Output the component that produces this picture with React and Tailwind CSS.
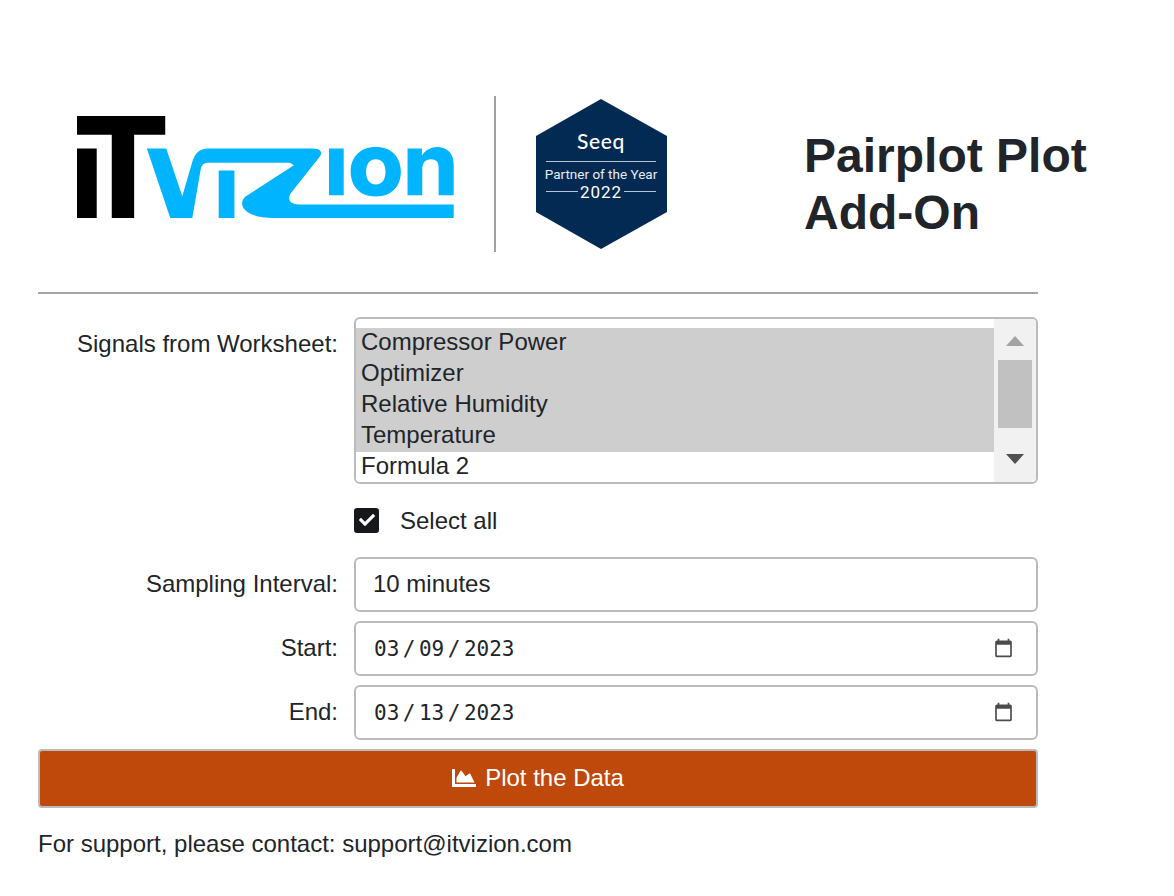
import React from 'react';
import { FaChartArea, FaCheck } from 'react-icons/fa';

const signals = [
  { name: 'Compressor Power', selected: true },
  { name: 'Optimizer', selected: true },
  { name: 'Relative Humidity', selected: true },
  { name: 'Temperature', selected: true },
  { name: 'Formula 2', selected: false },
];

const Logo = () => (
  <svg width="377" height="103" viewBox="53 78 1128 308" className="shrink-0 mb-[14px]">
    <path d="M53 78H317V134H224V383H157V134H53ZM53 175H112V383H53Z" fill="#000" />
    <path
      fill="#00b4ff"
      d="M262 175H320L368 318L398 215C405 190 420 175 445 175H760C785 176 790 188 775 205L692 310C680 332 695 343 725 343H1180V383H640C565 383 530 350 555 320L702 225L690 218H445C432 218 426 225 423 238L398 383H332Z"
    />
    <path fill="#00b4ff" d="M477 241H524V383H477ZM807 175H851V315H807ZM1042 175H1085V196C1097 180 1112 171 1130 171C1162 171 1180 190 1180 225V315H1135V232C1135 215 1128 207 1112 207C1096 207 1086 218 1086 236V315H1042Z" />
    <path fill="#00b4ff" fillRule="evenodd" d="M947 171C995 171 1022 202 1022 245C1022 288 995 319 947 319C899 319 872 288 872 245C872 202 899 171 947 171ZM947 207C927 207 918 223 918 245C918 267 927 283 947 283C967 283 976 267 976 245C976 223 967 207 947 207Z" />
  </svg>
);

const Badge = () => (
  <svg width="132" height="151" viewBox="0 0 132 151" className="shrink-0">
    <polygon points="65,0 131,37 131,113 65,150 0,113 0,37" fill="#032a52" />
    <text x="65" y="50" textAnchor="middle" fill="#fff" fontSize="21" fontWeight="500" letterSpacing="0.6" fontFamily="'Lato', sans-serif">Seeq</text>
    <line x1="10" x2="120" y1="62.5" y2="62.5" stroke="#b9c4d0" strokeWidth="1" />
    <text x="65" y="80" textAnchor="middle" fill="#e8edf2" fontSize="13.5" fontFamily="'Roboto', sans-serif">Partner of the Year</text>
    <line x1="10" x2="42" y1="92.5" y2="92.5" stroke="#b9c4d0" strokeWidth="1" />
    <line x1="88" x2="120" y1="92.5" y2="92.5" stroke="#b9c4d0" strokeWidth="1" />
    <text x="65" y="99" textAnchor="middle" fill="#fff" fontSize="17" letterSpacing="1" fontFamily="'Roboto', sans-serif">2022</text>
  </svg>
);

const Row = ({ label, children }) => (
  <div className="flex items-center">
    <label className="w-[300px] pb-[2px] text-right">{label}</label>
    <div className="ml-4 flex-1">{children}</div>
  </div>
);

const DateField = ({ value }) => (
  <input
    type="date"
    defaultValue={value}
    className="w-full h-[55px] pl-[17px] pr-[20px] border-2 border-[#bbbbbb] rounded-md bg-white font-['DejaVu_Sans_Mono',monospace] text-[21px] text-[#212529] [&::-webkit-datetime-edit-text]:px-[2.5px] [&::-webkit-calendar-picker-indicator]:opacity-70"
  />
);

export default function App() {
  return (
    <div className="w-[1174px] h-[896px] bg-white text-[24px] leading-[30px] text-[#212529] font-['Liberation_Sans',sans-serif]">
      <div className="ml-[38px] w-[1000px] pt-[96px]">
        <div className="flex items-center h-[156px] pl-[39px] whitespace-nowrap">
          <Logo />
          <div className="ml-[40px] w-[2px] h-[156px] bg-[#a0a0a0] shrink-0" />
          <div className="ml-[40px] shrink-0"><Badge /></div>
          <h1 className="ml-[136px] mt-[20px] shrink-0 text-[48px] leading-[57px] font-bold">
            Pairplot Plot
            <br />
            Add-On
          </h1>
        </div>

        <hr className="mt-[40px] border-t-2 border-[#a6a6a6]" />

        <div className="mt-[23px] flex items-start">
          <label className="w-[300px] pt-[12px] text-right">Signals from Worksheet:</label>
          <div className="ml-4 flex-1 h-[167px] flex border-2 border-[#bbbbbb] rounded-md overflow-hidden">
            <div className="flex-1 pt-[9px]">
              {signals.map((s) => (
                <div key={s.name} className={`h-[31px] pl-[5px] leading-[28px] ${s.selected ? 'bg-[#cecece]' : 'bg-white'}`}>
                  {s.name}
                </div>
              ))}
            </div>
            <div className="w-[42px] bg-[#f1f1f1] flex flex-col items-center pt-[17px]">
              <div className="w-0 h-0 border-x-[9px] border-x-transparent border-b-[10px] border-b-[#a3a3a3]" />
              <div className="mt-[14px] w-[34px] h-[68px] bg-[#c1c1c1]" />
              <div className="mt-[26px] w-0 h-0 border-x-[9px] border-x-transparent border-t-[10px] border-t-[#505050]" />
            </div>
          </div>
        </div>

        <div className="mt-[23px] ml-[316px] flex items-center h-[26px]">
          <div className="w-[25px] h-[25px] rounded-[3px] bg-[#16181b] flex items-center justify-center">
            <FaCheck className="text-white text-[16px]" />
          </div>
          <span className="ml-[21px] pt-[2px]">Select all</span>
        </div>

        <div className="mt-[24px] flex flex-col gap-[9px]">
          <Row label="Sampling Interval:">
            <div className="h-[55px] flex items-center pl-[17px] pr-[20px] pb-[2px] border-2 border-[#bbbbbb] rounded-md">10 minutes</div>
          </Row>
          <Row label="Start:">
            <DateField value="2023-03-09" />
          </Row>
          <Row label="End:">
            <DateField value="2023-03-13" />
          </Row>
        </div>

        <button className="mt-[9px] w-full h-[59px] flex items-center justify-center gap-[9px] pb-[2px] bg-[#bf490a] border-2 border-[#bbbbbb] rounded-[4px] text-white">
          <FaChartArea className="text-[24px]" />
          Plot the Data
        </button>

        <p className="mt-[21px]">For support, please contact: support@itvizion.com</p>
      </div>
    </div>
  );
}
